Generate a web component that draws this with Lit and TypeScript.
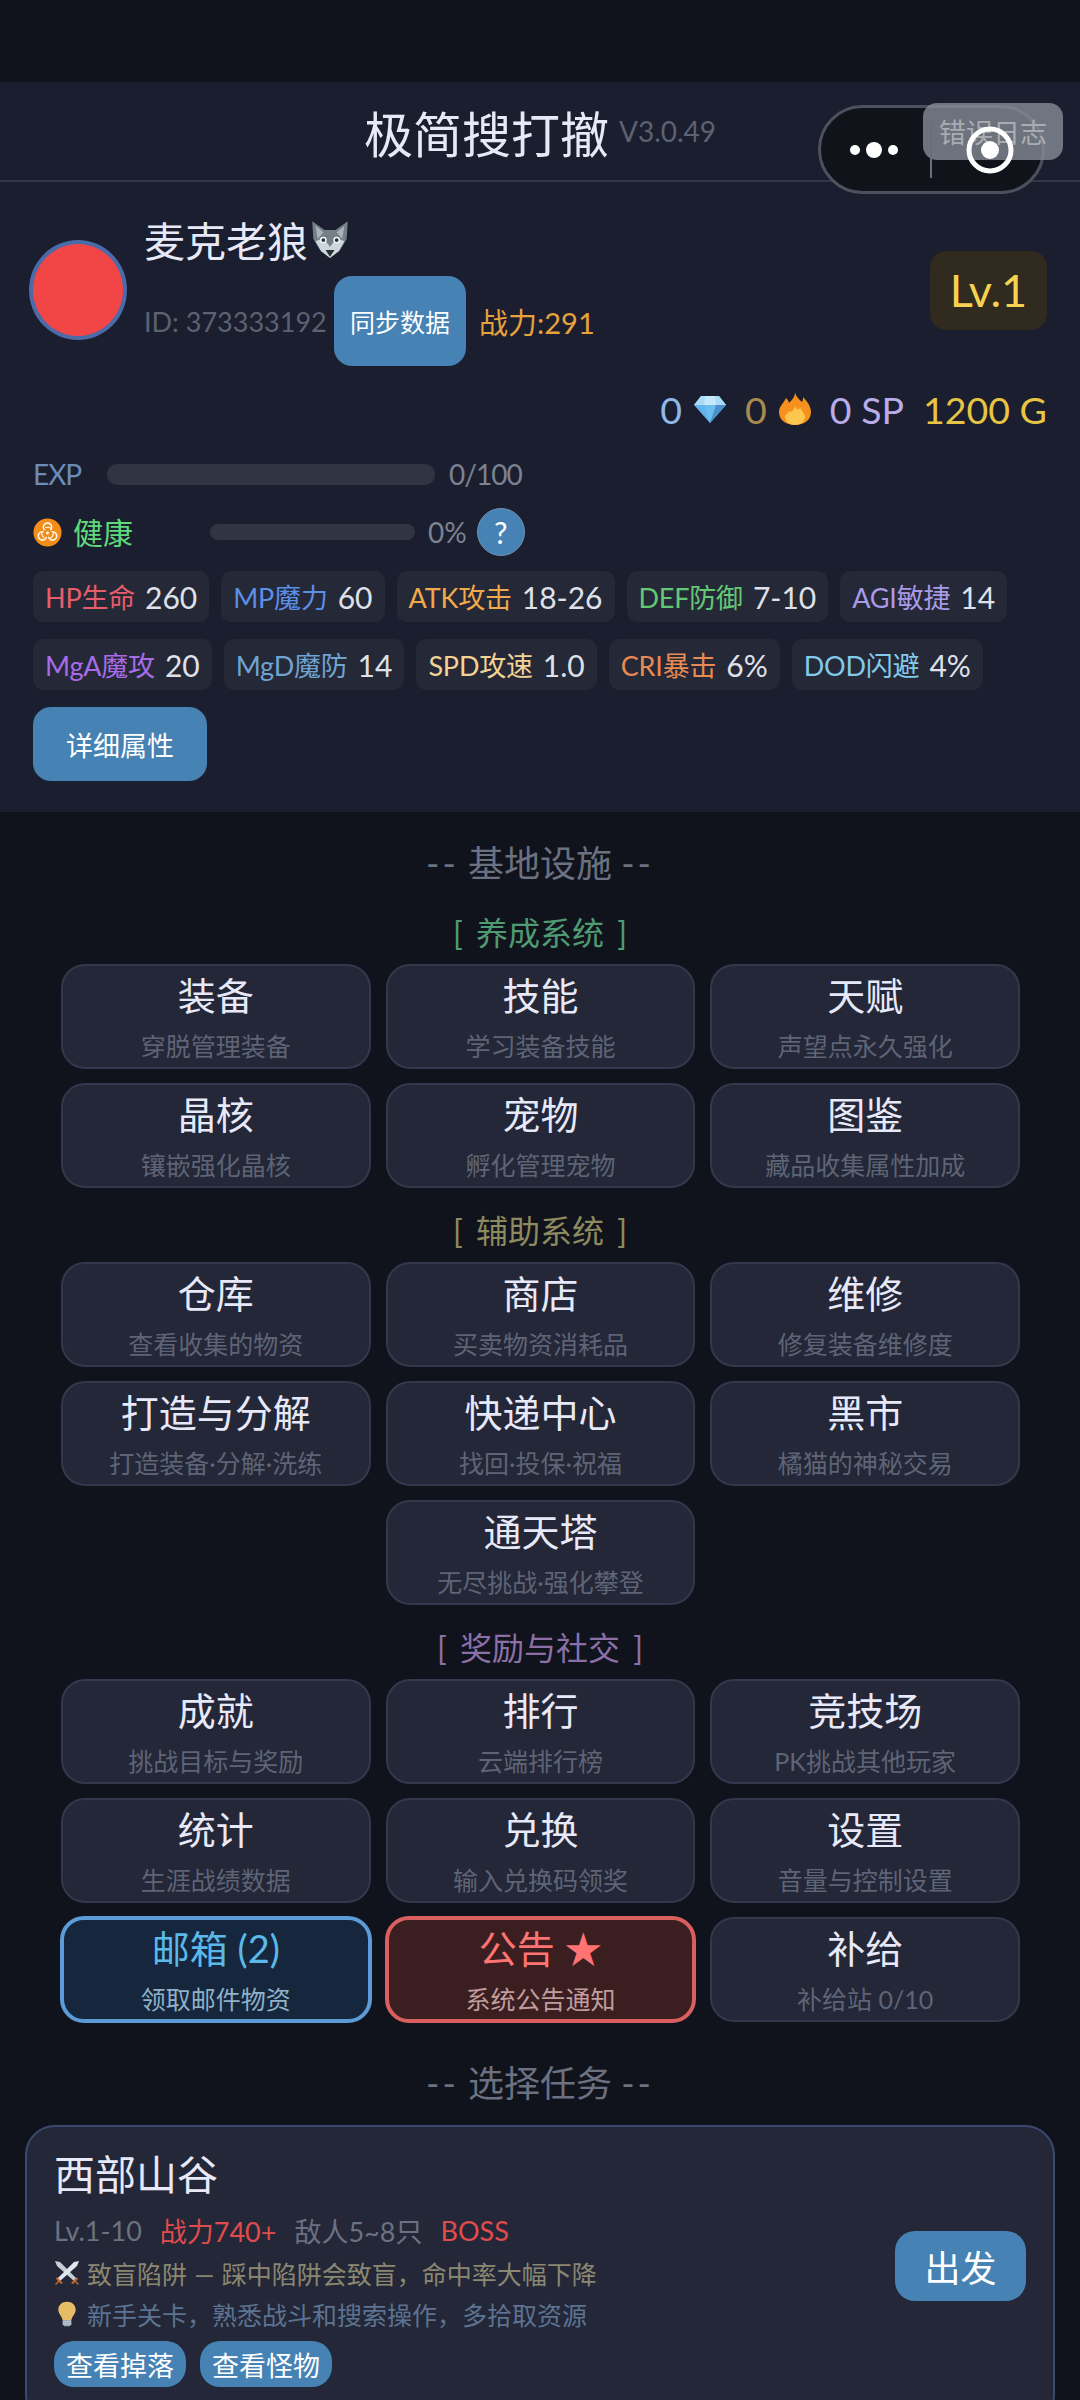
import { LitElement, html, css, svg } from "lit";
import { customElement } from "lit/decorators.js";

const stats = [
  ["HP生命", "260", "#e85d6c"],
  ["MP魔力", "60", "#5b8fe8"],
  ["ATK攻击", "18-26", "#f2a94a"],
  ["DEF防御", "7-10", "#62c873"],
  ["AGI敏捷", "14", "#a99ae8"],
  ["MgA魔攻", "20", "#a86ce8"],
  ["MgD魔防", "14", "#6fa3d0"],
  ["SPD攻速", "1.0", "#f2d394"],
  ["CRI暴击", "6%", "#e98a52"],
  ["DOD闪避", "4%", "#82c9ea"],
];

type Facility = { t: string; s: string; kind?: string };

const groups: { label: string; cls: string; items: Facility[] }[] = [
  {
    label: "[ 养成系统 ]",
    cls: "green",
    items: [
      { t: "装备", s: "穿脱管理装备" },
      { t: "技能", s: "学习装备技能" },
      { t: "天赋", s: "声望点永久强化" },
      { t: "晶核", s: "镶嵌强化晶核" },
      { t: "宠物", s: "孵化管理宠物" },
      { t: "图鉴", s: "藏品收集属性加成" },
    ],
  },
  {
    label: "[ 辅助系统 ]",
    cls: "gold",
    items: [
      { t: "仓库", s: "查看收集的物资" },
      { t: "商店", s: "买卖物资消耗品" },
      { t: "维修", s: "修复装备维修度" },
      { t: "打造与分解", s: "打造装备·分解·洗练" },
      { t: "快递中心", s: "找回·投保·祝福" },
      { t: "黑市", s: "橘猫的神秘交易" },
      { t: "通天塔", s: "无尽挑战·强化攀登", kind: "mid" },
    ],
  },
  {
    label: "[ 奖励与社交 ]",
    cls: "purple",
    items: [
      { t: "成就", s: "挑战目标与奖励" },
      { t: "排行", s: "云端排行榜" },
      { t: "竞技场", s: "PK挑战其他玩家" },
      { t: "统计", s: "生涯战绩数据" },
      { t: "兑换", s: "输入兑换码领奖" },
      { t: "设置", s: "音量与控制设置" },
      { t: "邮箱 (2)", s: "领取邮件物资", kind: "mail" },
      { t: "公告 ★", s: "系统公告通知", kind: "notice" },
      { t: "补给", s: "补给站 0/10" },
    ],
  },
];

const wolf = svg`<svg class="wolf" viewBox="0 0 36 36">
  <path d="M2 2l11 8h10l11-8-1 16-6 10-9 7-9-7-6-10z" fill="#757f87"/>
  <path d="M5 6l7 6-5 6zM31 6l-7 6 5 6z" fill="#a9b3b9"/>
  <path d="M5 20l7-3 6 8 6-8 7 3-5 9-8 6-8-6z" fill="#ccd6dd"/>
  <circle cx="12" cy="19" r="3" fill="#f5f8fa"/><circle cx="24" cy="19" r="3" fill="#f5f8fa"/>
  <circle cx="12" cy="19" r="1.7" fill="#292f33"/><circle cx="24" cy="19" r="1.7" fill="#292f33"/>
  <path d="M14 28h8l-4 6z" fill="#292f33"/>
</svg>`;

const diamond = svg`<svg class="gem" viewBox="0 0 32 28">
  <path d="M7 1h18l7 9-16 18L0 10z" fill="#62b3ee"/>
  <path d="M7 1h18l7 9H0z" fill="#a9daf8"/>
  <path d="M10 10h12l-6 18z" fill="#6dbcf2"/>
  <path d="M11 1h10l1 9H10z" fill="#c6e8fc"/>
  <path d="M22 10h10L16 28z" fill="#4a91c9"/>
</svg>`;

const fire = svg`<svg class="fire" viewBox="0 0 32 34">
  <path d="M16 0c1 5 4 7 7 10 1-2 1-3 1-5 5 5 8 10 8 15 0 8-7 13-16 13S0 28 0 20c0-6 5-9 7-14 2 2 3 4 3 5 3-3 6-6 6-11z" fill="#f6901e"/>
  <path d="M16 14c1 4 4 4 5 2 3 4 5 6 5 9 0 5-5 8-10 8S6 30 6 25c0-3 3-3 4-6 2 2 5-1 6-5z" fill="#fdc64c"/>
</svg>`;

const biohazard = svg`<svg class="bio" viewBox="0 0 30 30">
  <circle cx="15" cy="15" r="14.500" fill="#f28d18"/>
  <g fill="none" stroke="#fff" stroke-width="1.500">
    <path d="M12 12.500a4.300 4.300 0 1 1 6 0"/>
    <path d="M12 12.500a4.300 4.300 0 1 1 6 0" transform="rotate(120 15 15.500)"/>
    <path d="M12 12.500a4.300 4.300 0 1 1 6 0" transform="rotate(240 15 15.500)"/>
    <circle cx="15" cy="15.500" r="6" stroke-width="1.100" stroke-dasharray="6.500 6"/>
  </g>
  <circle cx="15" cy="15.500" r="1.500" fill="#fff"/>
</svg>`;

const swords = svg`<svg class="tip-icon" viewBox="0 0 26 26">
  <path d="M1 1l5 1 17 17-3 2L3 6z" fill="#c5ced5"/>
  <path d="M25 1l-5 1L3 19l3 2L23 6z" fill="#e1e8ed"/>
  <path d="M3 17l6 6-2 1-2-2-3 3-1-1 3-3-2-2zM23 17l-6 6 2 1 2-2 3 3 1-1-3-3 2-2z" fill="#c1692c"/>
</svg>`;

const bulb = svg`<svg class="tip-icon" viewBox="0 0 26 30">
  <path d="M13 1c6 0 10 4 10 9 0 5-4 7-5 12H8C7 17 3 15 3 10c0-5 4-9 10-9z" fill="#e6bd66"/>
  <path d="M8 22h10v5l-2 2h-6l-2-2z" fill="#99aab5"/>
  <path d="M8 24h10M8 26.500h10" stroke="#ccd6dd" stroke-width="1"/>
</svg>`;

@customElement("app-root")
export class AppRoot extends LitElement {
  static styles = css`
    :host {
      display: block;
      position: relative;
      width: 1080px;
      height: 2400px;
      overflow: hidden;
      background: #10131c;
      color: #e8e9f8;
      font-family: Lato, "Noto Sans CJK SC", sans-serif;
    }
    .status {
      height: 82px;
    }
    .header {
      height: 100px;
      box-sizing: border-box;
      background: #1a1e2e;
      border-bottom: 2px solid #32364a;
      display: flex;
      align-items: center;
      justify-content: center;
      gap: 10px;
    }
    .title {
      font-size: 49px;
    }
    .version {
      font-size: 28px;
      color: #5c6272;
    }
    .capsule {
      position: absolute;
      left: 818px;
      top: 105px;
      width: 227px;
      height: 89px;
      box-sizing: border-box;
      border: 3px solid #4d515e;
      border-radius: 45px;
      background: #11131b;
    }
    .log {
      position: absolute;
      left: 923px;
      top: 103px;
      width: 140px;
      height: 57px;
      border-radius: 14px;
      background: rgba(133, 139, 150, 0.8);
      color: #a9adb3;
      font-size: 27px;
      display: flex;
      align-items: center;
      justify-content: center;
    }
    .capsule-marks {
      position: absolute;
      left: 818px;
      top: 105px;
      width: 227px;
      height: 89px;
    }
    .panel {
      background: #1a1e2e;
      padding: 32px 33px 31px 33px;
      height: 630px;
      box-sizing: border-box;
    }
    .player {
      display: flex;
      align-items: center;
      margin-left: -4px;
    }
    .avatar {
      width: 98px;
      height: 100px;
      box-sizing: border-box;
      border-radius: 50%;
      border: 4px solid #4a6ba8;
      background: #f24545;
      flex: none;
    }
    .info {
      margin-left: 17px;
      flex: 1;
    }
    .name {
      display: flex;
      align-items: center;
      gap: 2px;
      height: 50px;
      font-size: 41px;
      margin-bottom: 12px;
    }
    .wolf {
      width: 40px;
      height: 40px;
    }
    .meta {
      display: flex;
      align-items: center;
      height: 90px;
    }
    .uid {
      font-size: 27px;
      color: #5c6272;
      width: 190px;
    }
    .btn {
      background: #4682b4;
      color: #fff;
      display: flex;
      align-items: center;
      justify-content: center;
      flex: none;
    }
    .sync {
      width: 132px;
      height: 90px;
      border-radius: 18px;
      font-size: 25px;
    }
    .power {
      margin-left: 13px;
      font-size: 29px;
      color: #e8a23c;
    }
    .lv {
      width: 117px;
      height: 79px;
      border-radius: 16px;
      background: #302b1e;
      color: #f5d24f;
      font-size: 45px;
      display: flex;
      align-items: center;
      justify-content: center;
    }
    .wallet {
      display: flex;
      justify-content: flex-end;
      align-items: center;
      gap: 19px;
      height: 44px;
      margin-top: 21px;
      font-size: 37.5px;
    }
    .coin {
      display: flex;
      align-items: center;
      gap: 12px;
    }
    .gem {
      width: 32px;
      height: 28px;
    }
    .fire {
      width: 32px;
      height: 34px;
    }
    .exp,
    .health {
      display: flex;
      align-items: center;
      font-size: 28px;
      color: #7c8290;
    }
    .exp {
      height: 30px;
      margin-top: 28px;
      letter-spacing: -1px;
    }
    .exp-label {
      width: 74px;
      color: #6b8cb8;
    }
    .bar {
      background: #303443;
    }
    .exp .bar {
      width: 328px;
      height: 21px;
      border-radius: 10px;
      margin-right: 14px;
    }
    .health {
      height: 48px;
      margin-top: 19px;
    }
    .bio {
      width: 29px;
      height: 29px;
      margin-right: 11px;
      flex: none;
    }
    .health-label {
      width: 137px;
      font-size: 30px;
      color: #5fd97b;
      margin-bottom: 2px;
    }
    .health .bar {
      width: 205px;
      height: 16px;
      border-radius: 8px;
      margin-right: 13px;
    }
    .help {
      width: 48px;
      height: 48px;
      box-sizing: border-box;
      border-radius: 50%;
      margin-left: 10px;
      border: 1px solid #6d93b5;
      font-size: 30px;
    }
    .stats {
      display: flex;
      flex-wrap: wrap;
      gap: 17px 12px;
      margin-top: 15px;
    }
    .stat {
      height: 51px;
      box-sizing: border-box;
      padding: 0 12px;
      border-radius: 10px;
      background: #252836;
      font-size: 30px;
      display: flex;
      align-items: center;
      gap: 10px;
      color: #dfe1ea;
    }
    .stat span:first-child {
      font-size: 27px;
      letter-spacing: -0.2px;
    }
    .detail {
      width: 174px;
      height: 74px;
      margin-top: 17px;
      border-radius: 18px;
      font-size: 27px;
    }
    .section {
      height: 50px;
      margin-top: 26px;
      font-size: 36px;
      color: #6b7180;
      text-align: center;
      line-height: 50px;
    }
    .dash {
      letter-spacing: 3px;
    }
    .sub {
      height: 44px;
      line-height: 44px;
      text-align: center;
      font-size: 32px;
      word-spacing: 5px;
      margin: 21px 0 9px;
    }
    .section + .group .sub {
      margin-top: 23px;
    }
    .green {
      color: #4f9b72;
    }
    .gold {
      color: #8e8a5f;
    }
    .purple {
      color: #8b70a8;
    }
    .grid {
      display: grid;
      grid-template-columns: repeat(3, 1fr);
      gap: 14px 15px;
      margin: 0 60px 0 61px;
    }
    .card {
      height: 105px;
      box-sizing: border-box;
      padding-top: 5px;
      border: 2px solid #33384c;
      border-radius: 24px;
      background: #232738;
      text-align: center;
    }
    .card b {
      display: block;
      font-weight: 400;
      font-size: 38px;
      line-height: 48px;
    }
    .card span {
      display: block;
      margin-top: 10px;
      font-size: 25px;
      line-height: 34px;
      color: #5e6475;
    }
    .mid {
      grid-column: 2;
    }
    .mail,
    .notice {
      border-width: 4px;
      margin: -1px;
      height: 107px;
      padding-top: 4px;
    }
    .mail {
      border-color: #5b9cd8;
      background: #16263c;
    }
    .mail b {
      color: #5bb9ea;
    }
    .mail span {
      color: #8fb1c9;
    }
    .notice {
      border-color: #d9605f;
      background: #3a1e20;
    }
    .notice b {
      color: #ff7372;
    }
    .notice span {
      color: #c29d9d;
    }
    .mission-title {
      margin-top: 36px;
    }
    .mission {
      margin: 17px 25px 0;
      box-sizing: border-box;
      height: 300px;
      padding: 21px 27px 0 27px;
      border: 2px solid #3a4a6e;
      border-radius: 30px;
      background: #232738;
      display: flex;
      align-items: flex-start;
      justify-content: space-between;
    }
    .mission-name {
      font-size: 41px;
      line-height: 54px;
    }
    .line {
      display: flex;
      align-items: center;
      font-size: 25px;
      height: 36px;
    }
    .facts {
      margin-top: 11px;
      height: 34px;
      gap: 18px;
      font-size: 27px;
      color: #6b7180;
    }
    .red {
      color: #e04c4c;
    }
    .trap {
      margin-top: 8px;
      color: #8b8771;
      word-spacing: 1px;
    }
    .tip {
      margin-top: 5px;
      color: #5c7391;
    }
    .tip-icon {
      width: 26px;
      height: 26px;
      margin-right: 7px;
    }
    .actions {
      display: flex;
      gap: 14px;
      margin-top: 9px;
    }
    .small {
      width: 132px;
      height: 46px;
      border-radius: 20px;
      font-size: 27px;
    }
    .go {
      width: 131px;
      height: 70px;
      margin-top: 83px;
      border-radius: 20px;
      font-size: 36px;
    }
  `;

  render() {
    return html`
      <div class="status"></div>
      <header class="header">
        <span class="title">极简搜打撤</span>
        <span class="version">V3.0.49</span>
      </header>
      <div class="capsule"></div>
      <div class="log">错误日志</div>
      <svg class="capsule-marks" viewBox="0 0 227 89">
        <path d="M113 17v56" stroke="#6b6f7a" stroke-width="2" />
        <circle cx="37" cy="45" r="5" fill="#fff" />
        <circle cx="56" cy="45" r="8" fill="#fff" />
        <circle cx="75" cy="45" r="5" fill="#fff" />
        <circle cx="172" cy="45" r="21" fill="none" stroke="#fff" stroke-width="5" />
        <circle cx="172" cy="45" r="9" fill="#fff" />
      </svg>

      <section class="panel">
        <div class="player">
          <div class="avatar"></div>
          <div class="info">
            <div class="name">麦克老狼${wolf}</div>
            <div class="meta">
              <span class="uid">ID: 373333192</span>
              <div class="btn sync">同步数据</div>
              <span class="power">战力:291</span>
            </div>
          </div>
          <div class="lv">Lv.1</div>
        </div>

        <div class="wallet">
          <span class="coin" style="color:#8fb8e8">0 ${diamond}</span>
          <span class="coin" style="color:#a88a50">0 ${fire}</span>
          <span style="color:#b9ace8">0 SP</span>
          <span style="color:#e8c444">1200 G</span>
        </div>

        <div class="exp">
          <span class="exp-label">EXP</span>
          <div class="bar"></div>
          <span>0/100</span>
        </div>
        <div class="health">
          ${biohazard}
          <span class="health-label">健康</span>
          <div class="bar"></div>
          <span>0%</span>
          <div class="btn help">?</div>
        </div>

        <div class="stats">
          ${stats.map(
            ([label, value, color]) => html`
              <div class="stat"><span style="color:${color}">${label}</span><span>${value}</span></div>
            `
          )}
        </div>
        <div class="btn detail">详细属性</div>
      </section>

      <div class="section"><span class="dash">--</span> 基地设施 <span class="dash">--</span></div>
      ${groups.map(
        (g) => html`
          <div class="group">
            <div class="sub ${g.cls}">${g.label}</div>
            <div class="grid">
              ${g.items.map(
                (c) => html`
                  <div class="card ${c.kind ?? ""}"><b>${c.t}</b><span>${c.s}</span></div>
                `
              )}
            </div>
          </div>
        `
      )}

      <div class="section mission-title"><span class="dash">--</span> 选择任务 <span class="dash">--</span></div>
      <div class="mission">
        <div>
          <div class="mission-name">西部山谷</div>
          <div class="line facts">
            <span>Lv.1-10</span>
            <span class="red">战力740+</span>
            <span>敌人5~8只</span>
            <span class="red">BOSS</span>
          </div>
          <div class="line trap">${swords}致盲陷阱 — 踩中陷阱会致盲，命中率大幅下降</div>
          <div class="line tip">${bulb}新手关卡，熟悉战斗和搜索操作，多拾取资源</div>
          <div class="actions">
            <div class="btn small">查看掉落</div>
            <div class="btn small">查看怪物</div>
          </div>
        </div>
        <div class="btn go">出发</div>
      </div>
    `;
  }
}
